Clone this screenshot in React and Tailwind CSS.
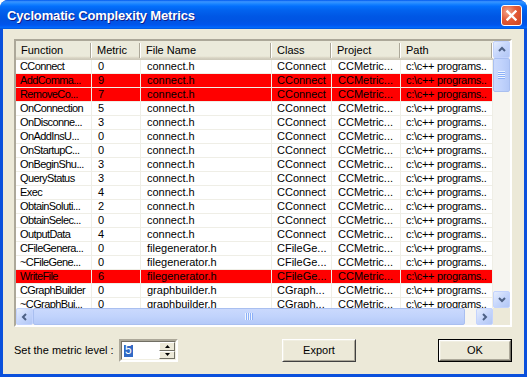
import React from "react";

const cols = [
  { label: "Function", w: "w-[76px]", pad: "pl-[4px] tracking-[-0.6px]" },
  { label: "Metric", w: "w-[49px]", pad: "pl-[6px]" },
  { label: "File Name", w: "w-[131px]", pad: "pl-[6px]" },
  { label: "Class", w: "w-[60px]", pad: "pl-[5px]" },
  { label: "Project", w: "w-[69px]", pad: "pl-[6px]" },
  { label: "Path", w: "w-[92px]", pad: "pl-[5px] tracking-[-0.3px]" },
];

const C = "CConnect";
const P = "CCMetric...";
const PATH = "c:\\c++ programs..";
const rows = [
  ["CConnect", "0", "connect.h", C, P, PATH, false],
  ["AddComma...", "9", "connect.h", C, P, PATH, true],
  ["RemoveCo...", "7", "connect.h", C, P, PATH, true],
  ["OnConnection", "5", "connect.h", C, P, PATH, false],
  ["OnDisconne...", "3", "connect.h", C, P, PATH, false],
  ["OnAddInsU...", "0", "connect.h", C, P, PATH, false],
  ["OnStartupC...", "0", "connect.h", C, P, PATH, false],
  ["OnBeginShu...", "3", "connect.h", C, P, PATH, false],
  ["QueryStatus", "3", "connect.h", C, P, PATH, false],
  ["Exec", "4", "connect.h", C, P, PATH, false],
  ["ObtainSoluti...", "2", "connect.h", C, P, PATH, false],
  ["ObtainSelec...", "0", "connect.h", C, P, PATH, false],
  ["OutputData", "4", "connect.h", C, P, PATH, false],
  ["CFileGenera...", "0", "filegenerator.h", "CFileGe...", P, PATH, false],
  ["~CFileGene...", "0", "filegenerator.h", "CFileGe...", P, PATH, false],
  ["WriteFile", "6", "filegenerator.h", "CFileGe...", P, PATH, true],
  ["CGraphBuilder", "0", "graphbuilder.h", "CGraph...", P, PATH, false],
  ["~CGraphBui...", "0", "graphbuilder.h", "CGraph...", P, PATH, false],
];

function Chevron({ dir }) {
  const pts = {
    up: "1,5 4,2 7,5",
    down: "1,2 4,5 7,2",
    left: "5,1 2,4 5,7",
    right: "2,1 5,4 2,7",
  }[dir];
  return (
    <svg width="8" height="8" viewBox="0 0 8 8">
      <polyline points={pts} fill="none" stroke="#4d6185" strokeWidth="2" />
    </svg>
  );
}

function SBtn({ dir }) {
  return (
    <div className="w-[17px] h-[17px] shrink-0 rounded-[2px] border border-[#c3d3fd] bg-[linear-gradient(135deg,#e5edfd_0%,#c6d6fb_50%,#b2c7f5_100%)] flex items-center justify-center">
      <Chevron dir={dir} />
    </div>
  );
}

export default function App() {
  return (
    <div className="w-[527px] h-[377px] bg-white font-['Liberation_Sans',Arial,sans-serif] text-[11px] text-black">
      <div className="w-[527px] h-[377px] rounded-t-[8px] bg-[#0a50dc] flex flex-col overflow-hidden">
        {/* Title bar */}
        <div className="h-[29px] shrink-0 flex items-center justify-between bg-[linear-gradient(to_bottom,#0058ee_0%,#3a93ff_6%,#288eff_10%,#127dff_16%,#036ffc_22%,#0262ee_36%,#0057e5_56%,#0054e3_70%,#0055eb_84%,#005bf5_90%,#026afe_94%,#0062ef_97%,#0052d6_100%)]">
          <div className="pl-[7px] pt-[2px] text-white font-bold text-[13px] [text-shadow:1px_1px_#0f1e8a] tracking-[-0.15px]">
            Cyclomatic Complexity Metrics
          </div>
          <div className="mr-[5px] mt-[1px] w-[21px] h-[21px] rounded-[3px] border border-white bg-[radial-gradient(circle_at_30%_30%,#f2a68c_0%,#e35a37_45%,#cc4421_100%)] flex items-center justify-center">
            <svg width="11" height="11" viewBox="0 0 11 11">
              <path d="M1.5 1.5 L9.5 9.5 M9.5 1.5 L1.5 9.5" stroke="white" strokeWidth="2.4" strokeLinecap="square" />
            </svg>
          </div>
        </div>

        {/* Client area */}
        <div className="flex-1 mx-[3px] mb-[3px] bg-[#ece9d8] flex flex-col pl-[11px] pr-[12px] pt-[10px]">
          {/* List box */}
          <div className="w-[498px] h-[288px] border-2 border-t-[#aca899] border-l-[#aca899] border-r-white border-b-white">
            <div className="w-[494px] h-[284px] bg-white flex flex-col">
              <div className="flex h-[267px]">
                {/* columns area */}
                <div className="w-[477px] overflow-hidden flex flex-col">
                  {/* header */}
                  <div className="flex h-[19px] shrink-0 bg-[linear-gradient(to_bottom,#ebeadb_0%,#ebeadb_80%,#e2decd_84%,#d6d2c2_90%,#cbc7b8_100%)]">
                    {cols.map((c, i) => (
                      <div key={i} className={`${c.w} shrink-0 flex items-center`}>
                        <div className="flex-1 pl-[5px] pb-[1px] whitespace-nowrap overflow-hidden">{c.label}</div>
                        <div className="w-[2px] h-[15px] border-l border-l-[#aca899] border-r border-r-white" />
                      </div>
                    ))}
                  </div>
                  {/* rows */}
                  <div className="flex flex-col">
                    {rows.map((r, ri) => (
                      <div key={ri} className={`flex h-[14px] shrink-0 ${r[6] ? "bg-[#ff0000]" : "bg-white"}`}>
                        {cols.map((c, ci) => (
                          <div
                            key={ci}
                            className={`${c.w} ${c.pad} shrink-0 h-[14px] leading-[13px] whitespace-nowrap overflow-hidden border-r border-b border-[#efeee6]`}
                          >
                            {r[ci]}
                          </div>
                        ))}
                      </div>
                    ))}
                  </div>
                </div>
                {/* vertical scrollbar */}
                <div className="w-[17px] h-[267px] bg-[#f6f5f0] flex flex-col">
                  <SBtn dir="up" />
                  <div className="h-[34px] w-[17px] rounded-[2px] border border-[#a9bff0] bg-[linear-gradient(to_right,#cad9fd_0%,#c1d3fc_50%,#b4c9f8_100%)] flex flex-col items-center justify-center gap-[1px]">
                    {[0, 1, 2, 3].map((i) => (
                      <div key={i} className="w-[7px] h-[1px] bg-[#8cb0f8] shadow-[0_-1px_0_#eef4fe]" />
                    ))}
                  </div>
                  <div className="flex-1" />
                  <SBtn dir="down" />
                </div>
              </div>
              {/* horizontal scrollbar row */}
              <div className="flex h-[17px]">
                <div className="w-[477px] h-[17px] bg-[#f6f5f0] flex">
                  <SBtn dir="left" />
                  <div className="w-[432px] h-[17px] rounded-[2px] border border-[#a9bff0] bg-[linear-gradient(to_bottom,#cad9fd_0%,#c1d3fc_50%,#b4c9f8_100%)] flex items-center justify-center gap-[1px]">
                    {[0, 1, 2, 3].map((i) => (
                      <div key={i} className="w-[1px] h-[7px] bg-[#8cb0f8] shadow-[-1px_0_0_#eef4fe]" />
                    ))}
                  </div>
                  <div className="flex-1" />
                  <SBtn dir="right" />
                </div>
                <div className="w-[17px] h-[17px] bg-[#ece9d8]" />
              </div>
            </div>
          </div>

          {/* Bottom controls */}
          <div className="flex items-center mt-[12px] h-[23px]">
            <div className="w-[105px] shrink-0">Set the metric level :</div>
            <div className="w-[59px] h-[23px] shrink-0 border-2 border-t-[#aca899] border-l-[#aca899] border-r-white border-b-white">
              <div className="w-full h-full bg-white flex border border-t-[#716f64] border-l-[#716f64] border-r-[#f1efe2] border-b-[#f1efe2]">
                <div className="flex-1 flex items-center pl-[2px]">
                  <span className="bg-[#316ac5] text-white leading-[11px] px-[1px] pb-[1px] text-[12px]">5</span>
                </div>
                <div className="w-[16px] flex flex-col">
                  <div className="flex-1 bg-[#ece9d8] border border-t-white border-l-white border-r-[#716f64] border-b-[#716f64] flex items-center justify-center">
                    <svg width="5" height="3" viewBox="0 0 5 3"><polygon points="0,3 2.5,0 5,3" fill="black" /></svg>
                  </div>
                  <div className="flex-1 bg-[#ece9d8] border border-t-white border-l-white border-r-[#716f64] border-b-[#716f64] flex items-center justify-center">
                    <svg width="5" height="3" viewBox="0 0 5 3"><polygon points="0,0 2.5,3 5,0" fill="black" /></svg>
                  </div>
                </div>
              </div>
            </div>
            <div className="ml-[104px] w-[74px] h-[23px] shrink-0 border border-t-white border-l-white border-r-[#404040] border-b-[#404040]">
              <div className="w-full h-full bg-[#ece9d8] border border-t-[#f1efe2] border-l-[#f1efe2] border-r-[#aca899] border-b-[#aca899] flex items-center justify-center">
                Export
              </div>
            </div>
            <div className="ml-[82px] w-[74px] h-[23px] shrink-0 border border-black">
              <div className="w-full h-full border border-t-white border-l-white border-r-[#716f64] border-b-[#716f64]">
                <div className="w-full h-full bg-[#ece9d8] border border-t-[#f1efe2] border-l-[#f1efe2] border-r-[#aca899] border-b-[#aca899] flex items-center justify-center">
                  OK
                </div>
              </div>
            </div>
          </div>
        </div>
      </div>
    </div>
  );
}
